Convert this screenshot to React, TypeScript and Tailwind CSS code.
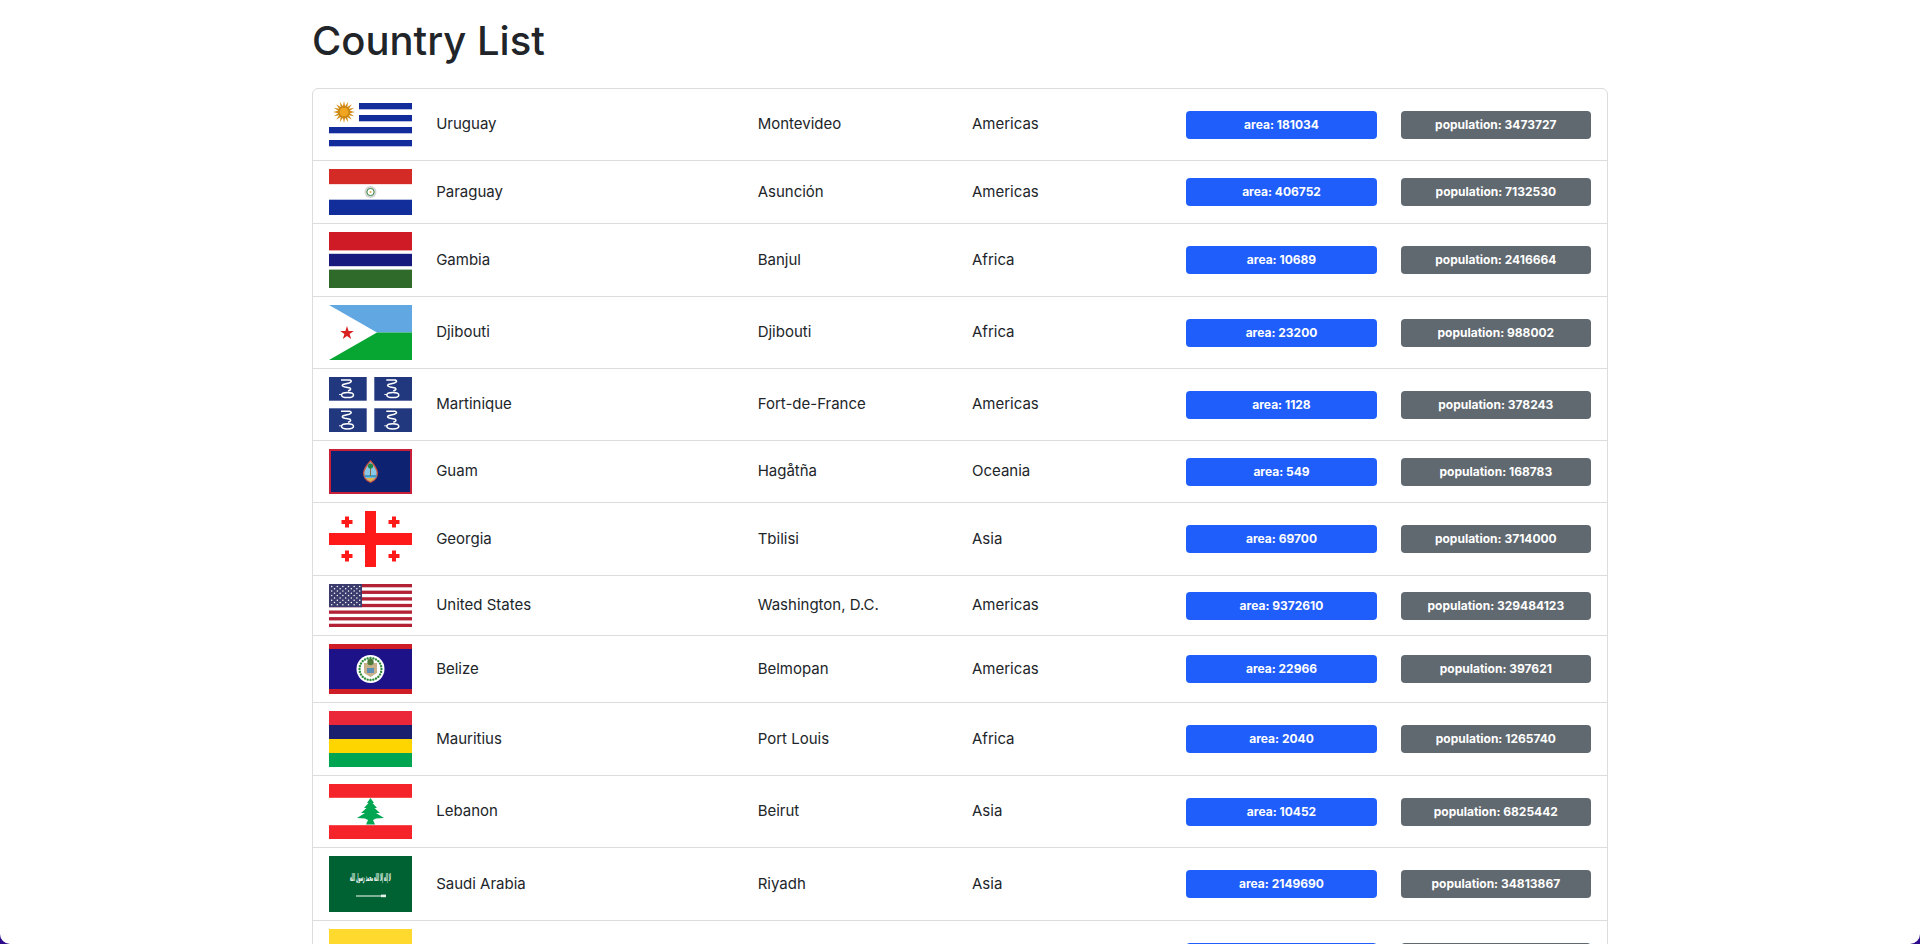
const FONT = "font-['Inter','Liberation_Sans',sans-serif]";

type Country = {
  name: string;
  capital: string;
  region: string;
  area: number;
  population: number;
  flagHeight: string;
  flag: React.ReactNode;
};

const Svg = ({ vb, children }: { vb: string; children: React.ReactNode }) => (
  <svg viewBox={vb} preserveAspectRatio="none" className="block w-full h-full">
    {children}
  </svg>
);

const Uruguay = () => {
  const rays = Array.from({ length: 16 }, (_, i) => i * 22.5);
  return (
    <Svg vb="0 0 83 55">
      <rect width="83" height="55" fill="#fff" />
      {[6, 18, 30, 43].map((y, i) => (
        <rect key={y} x={i < 2 ? 30 : 0} y={y} width={i < 2 ? 53 : 83} height="6.3" fill="#122c9c" />
      ))}
      <g transform="translate(15 15)">
        {rays.map((r) => (
          <path key={r} d="M-1.4 -4.5 L0 -11 L1.4 -4.5 Z" fill="#d08a12" transform={`rotate(${r})`} />
        ))}
        <circle r="5" fill="#f0a51e" stroke="#a96c0c" strokeWidth="0.6" />
      </g>
    </Svg>
  );
};

const Paraguay = () => (
  <Svg vb="0 0 83 46">
    <rect width="83" height="15.4" fill="#d52b27" />
    <rect y="15.4" width="83" height="15.3" fill="#fff" />
    <rect y="30.7" width="83" height="15.3" fill="#122e9b" />
    <circle cx="41.5" cy="23" r="6" fill="#d4d6d4" />
    <circle cx="41.5" cy="23" r="3.6" fill="#fff" stroke="#3a8a4a" strokeWidth="1" />
    <circle cx="41.5" cy="23" r="1" fill="#d8b23a" />
  </Svg>
);

const Gambia = () => (
  <Svg vb="0 0 83 56">
    <rect width="83" height="56" fill="#fff" />
    <rect width="83" height="18.4" fill="#ce1b26" />
    <rect y="21.8" width="83" height="12.4" fill="#171a7c" />
    <rect y="37.6" width="83" height="18.4" fill="#2f6a2b" />
  </Svg>
);

const Djibouti = () => (
  <Svg vb="0 0 83 55">
    <rect width="83" height="27.5" fill="#61a7e2" />
    <rect y="27.5" width="83" height="27.5" fill="#07a632" />
    <path d="M0 0 L48 27.5 L0 55 Z" fill="#fff" />
    <path
      d="M18 21 L19.6 26 L24.8 26 L20.6 29 L22.2 34 L18 31 L13.8 34 L15.4 29 L11.2 26 L16.4 26 Z"
      fill="#d7201f"
    />
  </Svg>
);

const Snake = ({ x, y }: { x: number; y: number }) => (
  <g transform={`translate(${x} ${y})`} fill="none" stroke="#fff" strokeWidth="1.5">
    <path d="M12 3 H21 Q24 4.5 20 6 L14 7.5 Q12 9 16 10 L21 11 Q23 12.5 19 14" />
    <ellipse cx="18.5" cy="18" rx="6" ry="2.6" />
    <path d="M10 17.5 H13" strokeWidth="0.9" />
  </g>
);

const Martinique = () => (
  <Svg vb="0 0 83 55">
    <rect width="83" height="55" fill="#fff" />
    {[
      [0, 0],
      [45.3, 0],
      [0, 31.3],
      [45.3, 31.3],
    ].map(([x, y]) => (
      <g key={`${x}-${y}`}>
        <rect x={x} y={y} width="37.7" height="23.7" fill="#21387f" />
        <Snake x={x} y={y} />
      </g>
    ))}
  </Svg>
);

const Guam = () => (
  <Svg vb="0 0 83 45">
    <rect width="83" height="45" fill="#c8203a" />
    <rect x="2" y="2" width="79" height="41" fill="#0d2270" />
    <path d="M41.5 11 Q49 19 49 24 Q49 31 41.5 34 Q34 31 34 24 Q34 19 41.5 11 Z" fill="#d2563d" />
    <path d="M41.5 13 Q47.6 20 47.6 24 Q47.6 30 41.5 32.6 Q35.4 30 35.4 24 Q35.4 20 41.5 13 Z" fill="#8ac8e8" />
    <rect x="35.6" y="26" width="12" height="2.4" fill="#3f9ac8" />
    <path d="M37 29 H46 L41.5 32.4 Z" fill="#e4b446" />
    <rect x="41" y="17" width="1" height="10" fill="#8a6a3a" />
    <circle cx="41.5" cy="17" r="2.6" fill="#1f8a4c" />
  </Svg>
);

const Georgia = () => {
  const plus = [
    [18, 11],
    [65, 11],
    [18, 45],
    [65, 45],
  ];
  return (
    <Svg vb="0 0 83 56">
      <rect width="83" height="56" fill="#fff" />
      <rect x="36" width="11" height="56" fill="#ff1a1a" />
      <rect y="22" width="83" height="12" fill="#ff1a1a" />
      {plus.map(([x, y]) => (
        <path
          key={`${x}-${y}`}
          transform={`translate(${x} ${y})`}
          d="M-2 -5.5 H2 V-2 H5.5 V2 H2 V5.5 H-2 V2 H-5.5 V-2 H-2 Z"
          fill="#ff1a1a"
        />
      ))}
    </Svg>
  );
};

const Usa = () => {
  const stars: [number, number][] = [];
  for (let r = 0; r < 9; r++) {
    const n = r % 2 ? 5 : 6;
    for (let c = 0; c < n; c++) {
      stars.push([(r % 2 ? 5.5 : 2.7) + c * 5.6, 2.4 + r * 2.3]);
    }
  }
  return (
    <Svg vb="0 0 83 43">
      <rect width="83" height="43" fill="#fff" />
      {Array.from({ length: 7 }, (_, i) => (
        <rect key={i} y={i * 6.62} width="83" height="3.31" fill="#b22234" />
      ))}
      <rect width="33" height="23.2" fill="#3c3b6e" />
      {stars.map(([x, y]) => (
        <circle key={`${x}-${y}`} cx={x} cy={y} r="0.75" fill="#fff" />
      ))}
    </Svg>
  );
};

const Belize = () => {
  const leaves = Array.from({ length: 24 }, (_, i) => i * 15);
  return (
    <Svg vb="0 0 83 50">
      <rect width="83" height="50" fill="#ce1d26" />
      <rect y="5" width="83" height="40" fill="#1d1288" />
      <circle cx="41.5" cy="25" r="14" fill="#fff" />
      {leaves.map((r) => (
        <circle key={r} cx="41.5" cy="14" r="1.2" fill="#2f8a3a" transform={`rotate(${r} 41.5 25)`} />
      ))}
      <path d="M35 19 H48 V29 L41.5 33 L35 29 Z" fill="#c8b08a" />
      <circle cx="41.5" cy="18" r="3.2" fill="#4f7a3a" />
      <path d="M38 24 H45 V29 H38 Z" fill="#5d8fb5" />
    </Svg>
  );
};

const Mauritius = () => (
  <Svg vb="0 0 4 4">
    <rect width="4" height="1" fill="#ea2839" />
    <rect y="1" width="4" height="1" fill="#1a206d" />
    <rect y="2" width="4" height="1" fill="#ffd500" />
    <rect y="3" width="4" height="1" fill="#00a551" />
  </Svg>
);

const Lebanon = () => (
  <Svg vb="0 0 83 55">
    <rect width="83" height="55" fill="#fff" />
    <rect width="83" height="13.8" fill="#f5242b" />
    <rect y="41.2" width="83" height="13.8" fill="#f5242b" />
    <path
      d="M41.5 14 L45 19 L43.5 19 L48 24 L45.5 24 L51 29 L47 29 L55 34 L47 34.5 L44 36 L46 40.5 L37 40.5 L39 36 L36 34.5 L28 34 L36 29 L32 29 L37.5 24 L35 24 L39.5 19 L38 19 Z"
      fill="#00a651"
    />
  </Svg>
);

const Saudi = () => (
  <Svg vb="0 0 83 56">
    <rect width="83" height="56" fill="#006233" />
    <text
      x="41.5"
      y="25"
      textAnchor="middle"
      fontSize="10.5"
      fontWeight="700"
      fill="#fff"
      fontFamily="DejaVu Sans, sans-serif"
      textLength="41"
      lengthAdjust="spacingAndGlyphs"
    >
      لا إله إلا الله محمد رسول الله
    </text>
    <rect x="27" y="39.4" width="25" height="1.2" fill="#cfe3d6" />
    <rect x="52" y="38.6" width="5" height="2.6" fill="#e6f0ea" />
  </Svg>
);

const YellowFlag = () => (
  <Svg vb="0 0 83 55">
    <rect width="83" height="55" fill="#ffd92e" />
    <circle cx="41.5" cy="27" r="11" fill="#6b5a2e" />
  </Svg>
);

const countries: Country[] = [
  { name: "Uruguay", capital: "Montevideo", region: "Americas", area: 181034, population: 3473727, flagHeight: "h-[55px]", flag: <Uruguay /> },
  { name: "Paraguay", capital: "Asunción", region: "Americas", area: 406752, population: 7132530, flagHeight: "h-[46px]", flag: <Paraguay /> },
  { name: "Gambia", capital: "Banjul", region: "Africa", area: 10689, population: 2416664, flagHeight: "h-[56px]", flag: <Gambia /> },
  { name: "Djibouti", capital: "Djibouti", region: "Africa", area: 23200, population: 988002, flagHeight: "h-[55px]", flag: <Djibouti /> },
  { name: "Martinique", capital: "Fort-de-France", region: "Americas", area: 1128, population: 378243, flagHeight: "h-[55px]", flag: <Martinique /> },
  { name: "Guam", capital: "Hagåtña", region: "Oceania", area: 549, population: 168783, flagHeight: "h-[45px]", flag: <Guam /> },
  { name: "Georgia", capital: "Tbilisi", region: "Asia", area: 69700, population: 3714000, flagHeight: "h-[56px]", flag: <Georgia /> },
  { name: "United States", capital: "Washington, D.C.", region: "Americas", area: 9372610, population: 329484123, flagHeight: "h-[43px]", flag: <Usa /> },
  { name: "Belize", capital: "Belmopan", region: "Americas", area: 22966, population: 397621, flagHeight: "h-[50px]", flag: <Belize /> },
  { name: "Mauritius", capital: "Port Louis", region: "Africa", area: 2040, population: 1265740, flagHeight: "h-[56px]", flag: <Mauritius /> },
  { name: "Lebanon", capital: "Beirut", region: "Asia", area: 10452, population: 6825442, flagHeight: "h-[55px]", flag: <Lebanon /> },
  { name: "Saudi Arabia", capital: "Riyadh", region: "Asia", area: 2149690, population: 34813867, flagHeight: "h-[56px]", flag: <Saudi /> },
  { name: "Vatican City", capital: "Vatican City", region: "Europe", area: 0, population: 451, flagHeight: "h-[55px]", flag: <YellowFlag /> },
];

const Badge = ({ label, color }: { label: string; color: string }) => (
  <span className={`block w-full h-7 leading-[28px] rounded-[4px] text-center text-xs font-bold text-white ${color}`}>
    {label}
  </span>
);

const Row = ({ c }: { c: Country }) => (
  <li className="grid grid-cols-12 items-center border-t first:border-t-0 border-[#dcdcdc] pl-[4px] pr-[4px] py-2 text-[#212529] text-[15px]">
    <div className="col-span-1 px-3">
      <div className={`w-[83px] ${c.flagHeight}`}>{c.flag}</div>
    </div>
    <div className="col-span-3 px-3">{c.name}</div>
    <div className="col-span-2 px-3">{c.capital}</div>
    <div className="col-span-2 px-3">{c.region}</div>
    <div className="col-span-2 px-3">
      <Badge label={`area: ${c.area}`} color="bg-[#1f5efb]" />
    </div>
    <div className="col-span-2 px-3">
      <Badge label={`population: ${c.population}`} color="bg-[#616970]" />
    </div>
  </li>
);

export default function App() {
  return (
    <div className={`h-screen overflow-hidden bg-[#2c0a8c] ${FONT}`}>
      <div className="h-full overflow-hidden rounded-b-[10px] bg-white">
        <div className="w-[1320px] mx-auto px-3">
          <h1 className="pt-[17px] pb-[16px] h-[88px] text-[40px] leading-[48px] font-medium text-[#212529]">
            Country List
          </h1>
          <ul className="border border-[#dcdcdc] rounded-[6px]">
            {countries.map((c) => (
              <Row key={c.name} c={c} />
            ))}
          </ul>
        </div>
      </div>
    </div>
  );
}
